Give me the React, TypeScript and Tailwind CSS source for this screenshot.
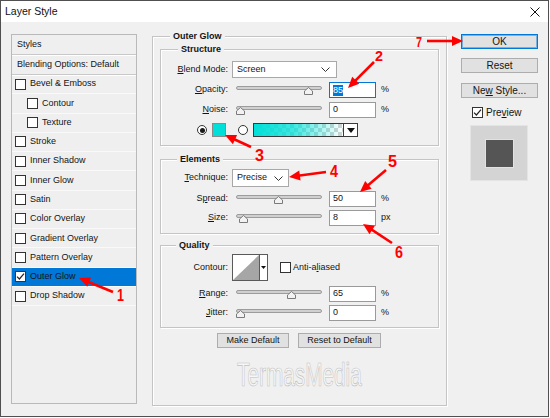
import React from "react";

const Check = ({ checked = false }: { checked?: boolean }) => (
  <span className="w-[11px] h-[11px] border border-[#333] bg-white flex items-center justify-center shrink-0">
    {checked && (
      <svg width="9" height="9" viewBox="0 0 9 9">
        <path d="M1 4.6 L3.4 7 L8 1.6" stroke="#222" strokeWidth="1.2" fill="none" />
      </svg>
    )}
  </span>
);

const Radio = ({ on = false }: { on?: boolean }) => (
  <span className="w-[10px] h-[10px] rounded-full border border-[#333] bg-white flex items-center justify-center shrink-0">
    {on && <span className="w-[5px] h-[5px] rounded-full bg-[#1a1a1a]" />}
  </span>
);

const Label = ({ children }: { children: React.ReactNode }) => (
  <div className="w-[67px] text-right shrink-0 whitespace-nowrap">{children}</div>
);

const Chevron = () => (
  <svg width="9" height="5" viewBox="0 0 9 5" className="shrink-0">
    <path d="M0.5 0.5 L4.5 4.5 L8.5 0.5" stroke="#333" strokeWidth="1" fill="none" />
  </svg>
);

const Thumb = ({ left }: { left: number }) => (
  <svg
    width="9"
    height="8"
    viewBox="0 0 9 8"
    className="absolute top-[5px]"
    style={{ left }}
  >
    <polygon points="4.5,0.5 8.5,4 8.5,7.5 0.5,7.5 0.5,4" fill="#f2f2f2" stroke="#7a7a7a" strokeWidth="1" />
  </svg>
);

const Field = ({ value, focused = false }: { value: string; focused?: boolean }) => (
  <div
    className={`ml-[7px] w-[47px] h-[16px] border bg-white flex items-center pl-[3px] shrink-0 ${
      focused ? "border-[#0078d7]" : "border-[#9a9a9a]"
    }`}
  >
    {focused ? (
      <span className="bg-[#0078d7] text-white leading-[11px]">{value}</span>
    ) : (
      <span>{value}</span>
    )}
  </div>
);

const SliderRow = ({
  label,
  value,
  unit,
  thumb,
  focused = false,
  mt,
}: {
  label: React.ReactNode;
  value: string;
  unit: string;
  thumb: number;
  focused?: boolean;
  mt: string;
}) => (
  <div className={`flex items-center h-[16px] ${mt}`}>
    <Label>{label}</Label>
    <div className="ml-[8px] relative w-[86px] h-[16px] shrink-0">
      <div className="mt-[4px] h-[4px] rounded-[2px] bg-[#d0d0d0] border border-[#9c9c9c]" />
      <Thumb left={thumb} />
    </div>
    <Field value={value} focused={focused} />
    <div className="ml-[5px]">{unit}</div>
  </div>
);

const Group = ({
  title,
  legendMl,
  className,
  children,
}: {
  title: string;
  legendMl: string;
  className: string;
  children: React.ReactNode;
}) => (
  <div
    className={`border border-[#c4c4c4] shadow-[inset_1px_1px_0_#ffffff,1px_1px_0_#ffffff] ${className}`}
  >
    <div className={`-mt-[7px] ${legendMl} px-[3px] w-fit bg-[#f0f0f0] font-bold leading-[12px] h-[12px]`}>
      {title}
    </div>
    {children}
  </div>
);

const items: { t: string; indent?: boolean; sel?: boolean }[] = [
  { t: "Bevel & Emboss" },
  { t: "Contour", indent: true },
  { t: "Texture", indent: true },
  { t: "Stroke" },
  { t: "Inner Shadow" },
  { t: "Inner Glow" },
  { t: "Satin" },
  { t: "Color Overlay" },
  { t: "Gradient Overlay" },
  { t: "Pattern Overlay" },
  { t: "Outer Glow", sel: true },
  { t: "Drop Shadow" },
];

const Btn = ({
  children,
  className,
}: {
  children: React.ReactNode;
  className: string;
}) => (
  <div
    className={`h-[15px] bg-[#e1e1e1] border border-[#adadad] flex items-center justify-center ${className}`}
  >
    {children}
  </div>
);

function Arrow({ x1, y1, x2, y2 }: { x1: number; y1: number; x2: number; y2: number }) {
  const dx = x2 - x1;
  const dy = y2 - y1;
  const L = Math.hypot(dx, dy);
  const ux = dx / L;
  const uy = dy / L;
  const hl = 11;
  const hw = 5;
  const bx = x2 - ux * hl;
  const by = y2 - uy * hl;
  const p1 = `${bx - uy * hw},${by + ux * hw}`;
  const p2 = `${bx + uy * hw},${by - ux * hw}`;
  return (
    <g>
      <line x1={x1} y1={y1} x2={bx + ux * 2} y2={by + uy * 2} stroke="#ff0000" strokeWidth="2.6" />
      <polygon points={`${x2},${y2} ${p1} ${p2}`} fill="#ff0000" />
    </g>
  );
}

const arrows = [
  [113, 292, 79, 278],
  [374, 62, 348, 88],
  [251, 147, 225, 135],
  [326, 172, 289, 177],
  [386, 170, 360, 192],
  [392, 243, 363, 224],
  [427, 41, 463, 41],
];

const nums = [
  { t: "1", x: 117, y: 301, w: 7, s: 16 },
  { t: "2", x: 375, y: 61, w: 8, s: 14 },
  { t: "3", x: 255, y: 161, w: 9, s: 16 },
  { t: "4", x: 330, y: 177, w: 8, s: 16 },
  { t: "5", x: 388, y: 167, w: 9, s: 16 },
  { t: "6", x: 395, y: 258, w: 8, s: 16 },
  { t: "7", x: 416, y: 47, w: 6, s: 15 },
];

export default function App() {
  return (
    <div className="relative w-[550px] h-[418px] bg-white font-['Liberation_Sans',Arial,sans-serif] text-[9px] text-[#141414]">
      <div className="w-[549px] h-[417px] border border-[#505050] bg-[#f0f0f0] flex flex-col">
        {/* Title bar */}
        <div className="h-[21px] bg-white flex items-center justify-between pl-[4px] pr-[8px] shrink-0">
          <span className="text-[10.5px] text-[#111]">Layer Style</span>
          <svg width="10" height="10" viewBox="0 0 10 10">
            <path d="M0.5 0.5 L9.5 9.5 M9.5 0.5 L0.5 9.5" stroke="#111" strokeWidth="1" />
          </svg>
        </div>

        {/* Body */}
        <div className="flex items-start pt-[12px] pl-[10px]">
          {/* Left list */}
          <div className="w-[126px] h-[370px] border border-[#b9b9b9] bg-[#efefef] flex flex-col shrink-0">
            <div className="h-[20px] flex items-center pl-[5px] border-b border-[#c9c9c9] shadow-[0_1px_0_#ffffff]">
              Styles
            </div>
            <div className="h-[20px] flex items-center pl-[5px] border-b border-[#c9c9c9] shadow-[0_1px_0_#ffffff]">
              Blending Options: Default
            </div>
            {items.map((it) => (
              <div
                key={it.t}
                className={`h-[19.27px] flex items-center border-b border-[#f9f9f9] ${
                  it.indent ? "pl-[15px]" : "pl-[3px]"
                } ${it.sel ? "bg-[#0078d7]" : ""}`}
              >
                <Check checked={!!it.sel} />
                <span className="ml-[4px]">{it.t}</span>
              </div>
            ))}
          </div>

          {/* Main group */}
          <Group title="Outer Glow" legendMl="ml-[17px]" className="ml-[15px] mt-[2px] w-[295px] h-[370px] shrink-0">
            <Group title="Structure" legendMl="ml-[17px]" className="ml-[7px] mt-[7px] w-[279px] pb-[8px]">
              <div className="flex items-center h-[17px] mt-[6px]">
                <Label>
                  <u>B</u>lend Mode:
                </Label>
                <div className="ml-[4px] w-[105px] h-[17px] border border-[#a8a8a8] bg-white flex items-center justify-between pl-[4px] pr-[6px]">
                  <span>Screen</span>
                  <Chevron />
                </div>
              </div>
              <SliderRow
                mt="mt-[4px]"
                label={
                  <>
                    <u>O</u>pacity:
                  </>
                }
                value="85"
                unit="%"
                thumb={68}
                focused
              />
              <SliderRow
                mt="mt-[4px]"
                label={
                  <>
                    <u>N</u>oise:
                  </>
                }
                value="0"
                unit="%"
                thumb={0}
              />
              <div className="flex items-center h-[14px] mt-[5px]">
                <div className="ml-[36px]">
                  <Radio on />
                </div>
                <div className="ml-[5px] w-[14px] h-[14px] border border-[#8a8a8a] bg-[#00e0d8]" />
                <div className="ml-[12px]">
                  <Radio />
                </div>
                <div className="ml-[5px] w-[105px] h-[14px] border border-[#3a3a3a] flex">
                  <div className="flex-1 bg-[conic-gradient(#d2d2d2_25%,#ffffff_0_50%,#d2d2d2_0_75%,#ffffff_0)] bg-[length:8px_8px]">
                    <div className="h-full bg-[linear-gradient(to_right,#00e0d8_0%,rgba(0,224,216,0.75)_45%,rgba(0,224,216,0)_100%)]" />
                  </div>
                  <div className="w-[14px] border-l border-[#3a3a3a] bg-white flex items-center justify-center">
                    <svg width="8" height="5" viewBox="0 0 8 5">
                      <polygon points="0,0 8,0 4,5" fill="#111" />
                    </svg>
                  </div>
                </div>
              </div>
            </Group>

            <Group title="Elements" legendMl="ml-[16px]" className="ml-[7px] mt-[13px] w-[279px] pb-[7px]">
              <div className="flex items-center h-[18px] mt-[4px]">
                <Label>
                  <u>T</u>echnique:
                </Label>
                <div className="ml-[4px] w-[57px] h-[18px] border border-[#a8a8a8] bg-white flex items-center justify-between pl-[4px] pr-[5px]">
                  <span>Precise</span>
                  <Chevron />
                </div>
              </div>
              <SliderRow
                mt="mt-[4px]"
                label={
                  <>
                    S<u>p</u>read:
                  </>
                }
                value="50"
                unit="%"
                thumb={38}
              />
              <SliderRow
                mt="mt-[3px]"
                label={
                  <>
                    <u>S</u>ize:
                  </>
                }
                value="8"
                unit="px"
                thumb={3}
              />
            </Group>

            <Group title="Quality" legendMl="ml-[15px]" className="ml-[7px] mt-[11px] w-[279px] pb-[6px]">
              <div className="flex items-center h-[27px] mt-[3px]">
                <Label>Contour:</Label>
                <div className="ml-[4px] w-[36px] h-[27px] border border-[#5a5a5a] bg-white flex">
                  <div className="w-[26px] h-full">
                    <svg width="26" height="25" viewBox="0 0 26 25">
                      <polygon points="0,25 26,0 26,25" fill="#a6a6a6" />
                    </svg>
                  </div>
                  <div className="flex-1 border-l border-[#5a5a5a] bg-white flex items-center justify-center">
                    <svg width="5" height="3" viewBox="0 0 5 3">
                      <polygon points="0,0 5,0 2.5,3" fill="#111" />
                    </svg>
                  </div>
                </div>
                <div className="ml-[12px]">
                  <Check />
                </div>
                <span className="ml-[2px]">
                  Anti-a<u>l</u>iased
                </span>
              </div>
              <SliderRow
                mt="mt-[5px]"
                label={
                  <>
                    <u>R</u>ange:
                  </>
                }
                value="65"
                unit="%"
                thumb={51}
              />
              <SliderRow
                mt="mt-[3px]"
                label={
                  <>
                    <u>J</u>itter:
                  </>
                }
                value="0"
                unit="%"
                thumb={0}
              />
            </Group>

            <div className="flex mt-[5px]">
              <Btn className="ml-[64px] w-[72px]">Make Default</Btn>
              <Btn className="ml-[9px] w-[83px]">Reset to Default</Btn>
            </div>

            <div className="mt-[14px] ml-[84px] h-[26px] w-fit leading-[26px] text-[33px] text-[#f7f7f7] [-webkit-text-stroke:0.7px_#bfbfbf] origin-left scale-x-[0.63] whitespace-nowrap">
              TermasMedia
            </div>
          </Group>

          {/* Right column */}
          <div className="ml-[14px] w-[77px] flex flex-col text-[10px] shrink-0">
            <div className="h-[15px] bg-[#e1e1e1] border border-[#0078d7] shadow-[inset_0_0_0_1px_rgba(0,120,215,0.45)] flex items-center justify-center">
              OK
            </div>
            <Btn className="mt-[9px]">Reset</Btn>
            <Btn className="mt-[10px]">
              <span>
                Ne<u>w</u> Style...
              </span>
            </Btn>
            <div className="mt-[9px] h-[11px] pl-[11px] flex items-center">
              <Check checked />
              <span className="ml-[3px]">
                Pre<u>v</u>iew
              </span>
            </div>
            <div className="mt-[7px] ml-[9px] w-[58px] h-[56px] bg-[#d4d4d4] border border-[#e4e4e4] flex items-center justify-center">
              <div className="w-[29px] h-[29px] bg-[#555555] border border-[#c6efec]" />
            </div>
          </div>
        </div>
      </div>

      {/* Annotation overlay */}
      <svg className="absolute inset-0 pointer-events-none" width="550" height="418" viewBox="0 0 550 418">
        {arrows.map((a, i) => (
          <Arrow key={i} x1={a[0]} y1={a[1]} x2={a[2]} y2={a[3]} />
        ))}
        {nums.map((n) => (
          <text
            key={n.t}
            x={n.x}
            y={n.y}
            fontSize={n.s}
            fontWeight="bold"
            fill="#ff0000"
            fontFamily="'Liberation Sans', Arial, sans-serif"
            textLength={n.w}
            lengthAdjust="spacingAndGlyphs"
          >
            {n.t}
          </text>
        ))}
      </svg>
    </div>
  );
}
